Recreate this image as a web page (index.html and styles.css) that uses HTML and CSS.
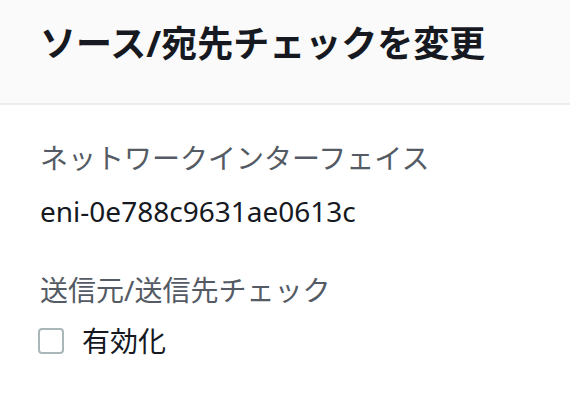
FILE: index.html
```html
<!DOCTYPE html>
<html lang="ja">
<head>
    <meta charset="UTF-8">
    <meta name="viewport" content="width=device-width, initial-scale=1.0">
    <title>ソース/宛先チェックを変更</title>
    <link rel="stylesheet" href="styles.css">
</head>
<body>
    <div class="modal">
        <div class="modal-header">
            <h2 class="modal-title">ソース/宛先チェックを変更</h2>
        </div>
        <div class="modal-body">
            <div class="field">
                <div class="field-label">ネットワークインターフェイス</div>
                <div class="field-value">eni-0e788c9631ae0613c</div>
            </div>
            <div class="field">
                <div class="field-label">送信元/送信先チェック</div>
                <label class="checkbox">
                    <input type="checkbox">
                    <span class="box"></span>
                    <span class="checkbox-text">有効化</span>
                </label>
            </div>
        </div>
    </div>
</body>
</html>
```

FILE: styles.css
```css
*{
    margin: 0;
    padding: 0;
    box-sizing: border-box;
}
body{
    font-family: "Noto Sans", "Noto Sans CJK JP", sans-serif;
    color: #16191f;
    background: #fff;
}
.modal-header{
    background: #fafafa;
    border-bottom: 2px solid #eaeded;
    height: 105px;
    padding: 22px 40px 0;
}
.modal-title{
    font-size: 36px;
    font-weight: 700;
    line-height: 44px;
}
.modal-body{
    padding: 33px 40px 0;
}
.field{
    margin-bottom: 39px;
}
.field-label{
    color: #545b64;
    font-size: 28px;
    line-height: 40px;
}
.field-value{
    font-size: 28px;
    line-height: 40px;
    margin-top: 13px;
}
.checkbox{
    display: flex;
    align-items: center;
    gap: 18px;
    height: 40px;
    margin-top: 11px;
}
.checkbox input{
    display: none;
}
.box{
    width: 26px;
    height: 26px;
    border: 2px solid #aab7b8;
    border-radius: 4px;
    margin-left: -2px;
}
.checkbox-text{
    font-size: 28px;
    line-height: 40px;
}
```
